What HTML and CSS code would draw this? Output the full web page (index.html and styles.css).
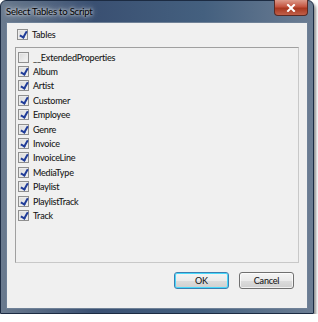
FILE: index.html
```html
<!DOCTYPE html>
<html lang="en">
<head>
    <meta charset="UTF-8">
    <title>Select Tables to Script</title>
    <link rel="stylesheet" href="styles.css">
</head>
<body>

<div class="window">
    <div class="titlebar">
        <span class="title">Select Tables to Script</span>
        <button class="close" type="button" aria-label="Close">
            <svg width="10" height="8" viewBox="0 0 10 8">
                <path d="M2 1 L8 7 M8 1 L2 7" stroke="#fff" stroke-width="2" stroke-linecap="square"/>
            </svg>
        </button>
    </div>

    <div class="client">
        <label class="check-row head">
            <span class="box checked"></span>
            <span>Tables</span>
        </label>

        <div class="list">
            <label class="check-row"><span class="box"></span><span>__ExtendedProperties</span></label>
            <label class="check-row"><span class="box checked"></span><span>Album</span></label>
            <label class="check-row"><span class="box checked"></span><span>Artist</span></label>
            <label class="check-row"><span class="box checked"></span><span>Customer</span></label>
            <label class="check-row"><span class="box checked"></span><span>Employee</span></label>
            <label class="check-row"><span class="box checked"></span><span>Genre</span></label>
            <label class="check-row"><span class="box checked"></span><span>Invoice</span></label>
            <label class="check-row"><span class="box checked"></span><span>InvoiceLine</span></label>
            <label class="check-row"><span class="box checked"></span><span>MediaType</span></label>
            <label class="check-row"><span class="box checked"></span><span>Playlist</span></label>
            <label class="check-row"><span class="box checked"></span><span>PlaylistTrack</span></label>
            <label class="check-row"><span class="box checked"></span><span>Track</span></label>
        </div>

        <div class="buttons">
            <button type="button" class="btn default">OK</button>
            <button type="button" class="btn">Cancel</button>
        </div>
    </div>
</div>

</body>
</html>
```

FILE: styles.css
```css
* {
    margin: 0;
    padding: 0;
    box-sizing: border-box;
}

body {
    background: #fff;
    font-family: Lato, "Liberation Sans", sans-serif;
    font-size: 9px;
    letter-spacing: -0.2px;
    color: #111;
    -webkit-text-stroke: 0.08px #333;
}

/* Window frame (Aero style) */
.window {
    width: 314px;
    height: 314px;
    display: flex;
    flex-direction: column;
    border: 1px solid #1c2b42;
    border-radius: 6px 6px 0 0;
    background: linear-gradient(90deg, #6a7a8e 0%, #3a5072 30%, #44607f 65%, #6c7d93 100%);
    box-shadow: 2px 3px 3px rgba(0, 0, 0, 0.45);
    padding: 0 5px 4px;
}

.titlebar {
    height: 21px;
    display: flex;
    align-items: flex-start;
    justify-content: space-between;
}

.title {
    font-size: 9.5px;
    color: #000;
    margin-top: 5px;
    text-shadow: 0 0 6px rgba(255, 255, 255, 0.9), 0 0 3px rgba(255, 255, 255, 0.9);
}

.close {
    width: 34px;
    height: 16px;
    margin-top: -1px;
    border: 1px solid #5a2a24;
    border-top: none;
    border-radius: 0 0 4px 4px;
    background: linear-gradient(#dc9a8a 0%, #c45440 45%, #a8371f 55%, #c0604a 100%);
    display: flex;
    align-items: center;
    justify-content: center;
}

.client {
    flex: 1;
    background: #f0f0f0;
    border: 1px solid #6f8197;
    display: flex;
    flex-direction: column;
    padding: 6px 8px 19px;
}

.check-row {
    display: flex;
    align-items: center;
    gap: 4px;
    height: 14.4px;
    white-space: nowrap;
}

.head {
    margin-left: 2px;
    height: 11px;
}

.box {
    width: 11px;
    height: 11px;
    border: 1px solid #8f8f8f;
    background: linear-gradient(135deg, #d8d8d8, #f6f6f6);
    box-shadow: inset 0 0 0 1px #ececec;
    flex: none;
    position: relative;
    -webkit-text-stroke: 0;
}

.box.checked::after {
    content: "";
    position: absolute;
    left: 3px;
    top: 0;
    width: 3px;
    height: 6px;
    border: solid #203c98;
    border-width: 0 2px 2px 0;
    transform: rotate(30deg);
}

.list {
    margin-top: 7px;
    height: 216px;
    border: 1px solid #a0a0a0;
    border-right-color: #c8c8c8;
    border-bottom-color: #c8c8c8;
    padding: 2px 2px;
    display: flex;
    flex-direction: column;
}

.buttons {
    margin-top: auto;
    display: flex;
    justify-content: flex-end;
    gap: 10px;
    padding-right: 5px;
}

.btn {
    width: 55px;
    height: 17px;
    font-family: inherit;
    font-size: 9px;
    letter-spacing: -0.2px;
    color: #111;
    -webkit-text-stroke: 0.08px #333;
    border: 1px solid #707070;
    border-radius: 3px;
    background: linear-gradient(#f4f4f4 0%, #ebebeb 50%, #dddddd 51%, #cfcfcf 100%);
    box-shadow: inset 0 0 0 1px rgba(255, 255, 255, 0.7);
}

.btn.default {
    border-color: #3c7fb1;
    box-shadow: inset 0 0 0 1px #48d8fb;
}
```
